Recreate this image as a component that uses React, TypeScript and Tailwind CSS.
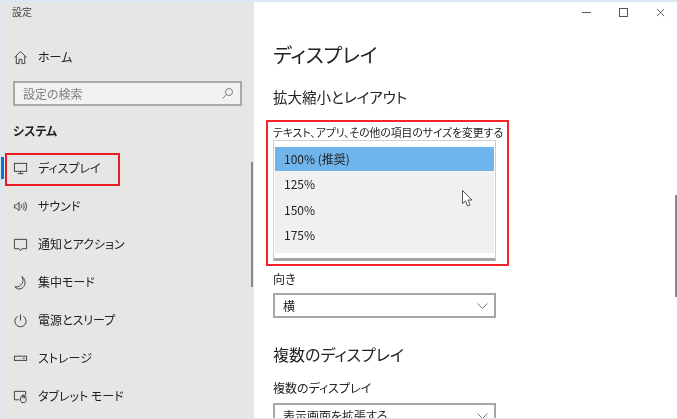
import type { ReactNode } from "react";

const font = "font-['Noto_Sans_CJK_JP','Noto_Sans',sans-serif] [font-feature-settings:'palt']";

const stroke = {
  fill: "none",
  stroke: "#3a3a3a",
  strokeWidth: 1,
};

function Icon({ children }: { children: ReactNode }) {
  return (
    <svg width="15" height="15" viewBox="0 0 16 16" {...stroke} className="shrink-0">
      {children}
    </svg>
  );
}

const items: { label: string; icon: ReactNode }[] = [
  {
    label: "サウンド",
    icon: (
      <Icon>
        <path d="M1.5 6.5h2l3-3v9l-3-3h-2z" />
        <path d="M8.5 6a3 3 0 0 1 0 4M10.5 4.5a5 5 0 0 1 0 7M12.5 3a7.5 7.5 0 0 1 0 10" />
      </Icon>
    ),
  },
  {
    label: "通知とアクション",
    icon: (
      <Icon>
        <path d="M1.5 2.5h13v10h-5l-1.5 2-1.5-2h-5z" />
      </Icon>
    ),
  },
  {
    label: "集中モード",
    icon: (
      <Icon>
        <path d="M9.5 1.5c2 3.5 1.5 8-3 10.500-1.500.8-3 .9-4.500.5 1.500 2 4 3 6.500 2 3.500-1.300 5-5 4-8.500-.5-1.800-1.500-3.400-3-4.500z" />
      </Icon>
    ),
  },
  {
    label: "電源とスリープ",
    icon: (
      <Icon>
        <path d="M8 1.500v6.500" />
        <path d="M5 3.500a6 6 0 1 0 6 0" />
      </Icon>
    ),
  },
  {
    label: "ストレージ",
    icon: (
      <Icon>
        <rect x="1.500" y="5.500" width="13" height="4.500" />
        <path d="M10.500 7.800h2" />
      </Icon>
    ),
  },
  {
    label: "タブレット モード",
    icon: (
      <Icon>
        <path d="M7 11.500H1.500v-9h12v4" />
        <path d="M9.500 14.500a3 3 0 0 1-1.500-2.500v-2a3 3 0 0 1 6 0v2a3 3 0 0 1-1.500 2.500zM10.500 10V6.500h1.500V10" />
      </Icon>
    ),
  },
];

function Chevron() {
  return (
    <svg width="11" height="6" viewBox="0 0 11 6" fill="none" stroke="#7a7a7a" strokeWidth="1">
      <path d="M.5.5l5 5 5-5" />
    </svg>
  );
}

function Select({ value }: { value: string }) {
  return (
    <div className="flex h-[25px] w-[223px] shrink-0 items-center justify-between border-2 border-[#a6a6a6] bg-white pl-[8px] pr-[6px] text-[12px] text-[#222]">
      <span>{value}</span>
      <Chevron />
    </div>
  );
}

export default function App() {
  return (
    <div className={`${font} relative flex h-[419px] w-[677px] overflow-hidden border-t-2 border-b border-l border-[#dbe8f3] bg-white text-[#222] blur-[0.45px]`}>
      {/* sidebar */}
      <aside className="relative flex w-[253px] shrink-0 flex-col bg-[#e6e6e6]">
        <div className="pl-[11px] pt-[1px] text-[10px] leading-[18px] text-[#444]">設定</div>
        <div className="mt-[17px] flex h-[38px] items-center gap-[10px] pl-[12px] text-[12px]">
          <Icon>
            <path d="M1.500 8L8 1.500 14.500 8" />
            <path d="M3.500 6.500v8h3v-4.500h3v4.500h3v-8" />
          </Icon>
          <span>ホーム</span>
        </div>
        <div className="ml-[12px] mt-[5px] flex h-[25px] w-[229px] items-center justify-between border-2 border-[#a9a9a9] bg-[#f2f2f2] pl-[8px] pr-[6px] text-[12px] text-[#808080]">
          <span>設定の検索</span>
          <svg width="13" height="13" viewBox="0 0 13 13" fill="none" stroke="#808080" strokeWidth="1">
            <circle cx="8" cy="5" r="3.500" />
            <path d="M5.500 7.500L1.500 11.500" />
          </svg>
        </div>
        <div className="ml-[12px] mt-[16px] text-[12px] font-bold leading-[18px]">システム</div>
        <div className="relative mt-[9px] flex h-[38px] items-center gap-[10px] pl-[12px] text-[12px]">
          <div className="absolute left-0 top-[8px] h-[22px] w-[3px] bg-[#0078d7]" />
          <Icon>
            <rect x="1.500" y="2.500" width="13" height="8.500" />
            <path d="M8 11v2.500M5 13.500h6" />
          </Icon>
          <span>ディスプレイ</span>
        </div>
        {items.map((item) => (
          <div key={item.label} className="flex h-[38px] shrink-0 items-center gap-[10px] pl-[12px] text-[12px]">
            {item.icon}
            <span>{item.label}</span>
          </div>
        ))}
        <div className="absolute right-[1px] top-[160px] h-[125px] w-[2px] bg-[#8a8a8a]" />
      </aside>

      {/* content */}
      <main className="relative flex-1 pl-[19px]">
        <div className="flex h-[20px] items-center justify-end gap-[28px] pr-[12px]">
          <div className="h-px w-[9px] bg-[#555]" />
          <div className="h-[9px] w-[9px] border border-[#555]" />
          <svg width="9" height="9" viewBox="0 0 10 10" stroke="#555" strokeWidth="1">
            <path d="M1 1l8 8M9 1l-8 8" />
          </svg>
        </div>
        <h1 className="mt-[18px] text-[20px] font-normal leading-[30px]">ディスプレイ</h1>
        <h2 className="mt-[15px] text-[14.500px] font-normal leading-[24px]">拡大縮小とレイアウト</h2>
        <div className="mt-[15px] whitespace-nowrap text-[10.800px] leading-[16px]">テキスト、アプリ、その他の項目のサイズを変更する</div>
        <div className="flex h-[121px] w-[223px] flex-col border border-[#d0d0d0] border-b-[3px] border-b-[#a6a6a6] bg-white">
          <div className="mx-px mt-[6px] flex h-[106px] flex-col bg-[#f0f0f0] text-[12px]">
            <div className="flex h-[24px] shrink-0 items-center bg-[#70b4ec] pb-[1px] pl-[9px]">100% (推奨)</div>
            <div className="flex h-[26px] shrink-0 items-center pl-[9px]">125%</div>
            <div className="flex h-[25px] shrink-0 items-center pl-[9px] pt-[1px]">150%</div>
            <div className="flex h-[25px] shrink-0 items-center pl-[9px] pt-[1px]">175%</div>
          </div>
        </div>
        <div className="mt-[9px] text-[12px] leading-[18px]">向き</div>
        <div className="mt-[5px]">
          <Select value="横" />
        </div>
        <h2 className="mt-[24px] text-[16px] font-normal leading-[24px]">複数のディスプレイ</h2>
        <div className="mt-[13px] text-[12px] leading-[18px]">複数のディスプレイ</div>
        <div className="mt-[6px]">
          <Select value="表示画面を拡張する" />
        </div>
        <div className="absolute right-0 top-[193px] h-[102px] w-[2px] bg-[#8a8a8a]" />
      </main>

      {/* red callouts */}
      <div className="absolute left-[4px] top-[151px] h-[33px] w-[115px] border-2 border-[#ed1c24]" />
      <div className="absolute left-[265px] top-[118px] h-[146px] w-[243px] border-2 border-[#f4242c]" />

      {/* pointer */}
      <svg className="absolute left-[460px] top-[187px]" width="14" height="20" viewBox="0 0 14 20" fill="#fff" stroke="#555" strokeWidth="1">
        <path d="M1.500 1.500v13l3-2.500 2 5 2.500-1-2-5h4z" />
      </svg>
    </div>
  );
}
